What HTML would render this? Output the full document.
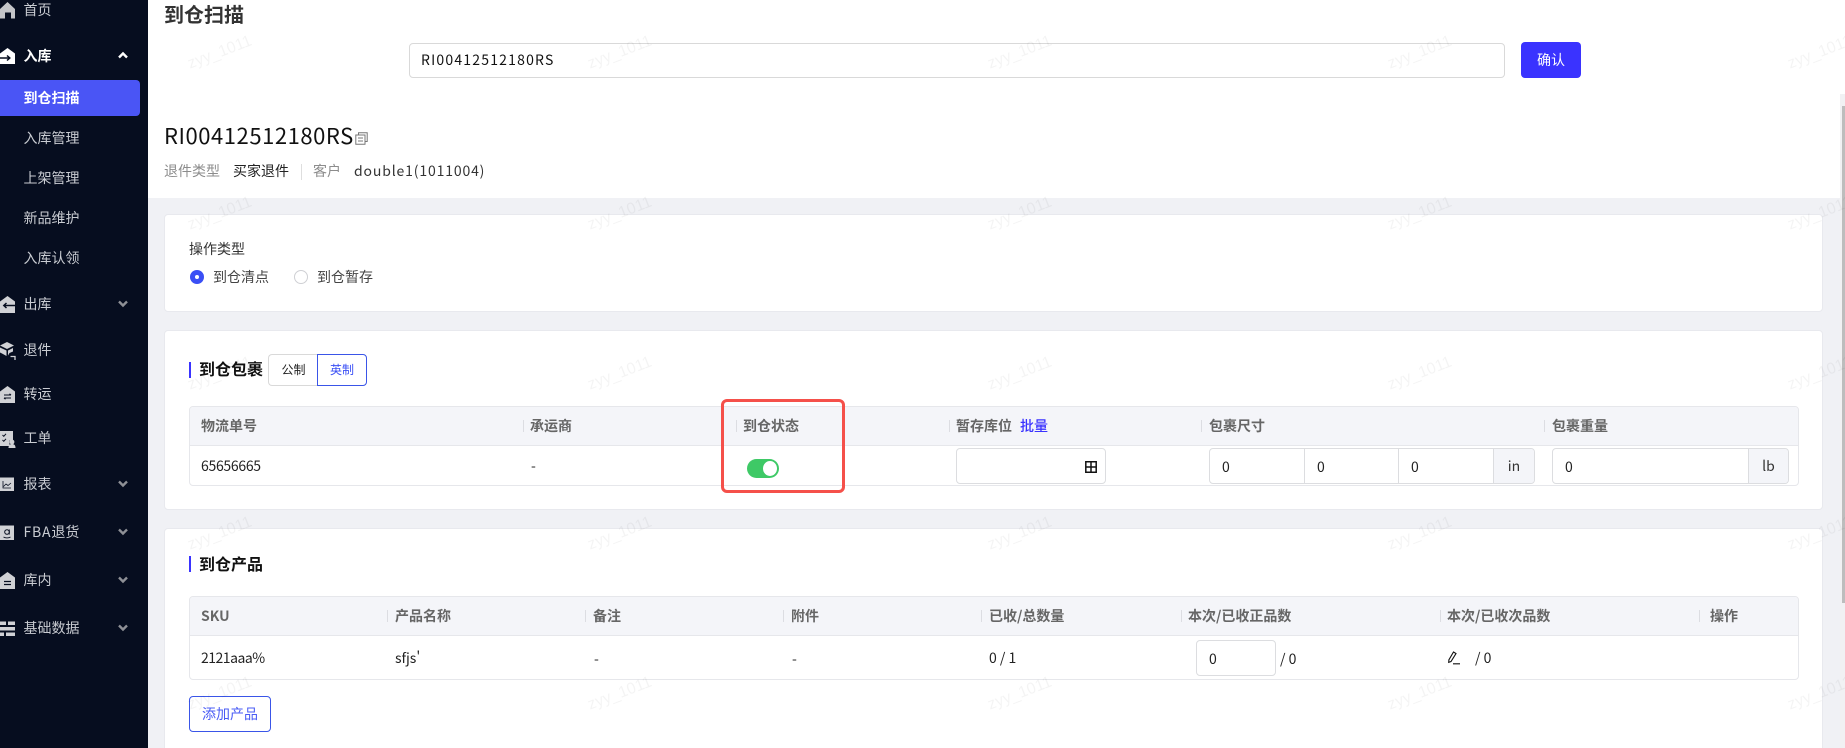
<!DOCTYPE html>
<html lang="zh">
<head>
<meta charset="utf-8">
<title>到仓扫描</title>
<style>
html,body{margin:0;padding:0;width:1845px;height:748px;overflow:hidden;background:#fff}
body{position:relative;font-family:"Noto Sans CJK SC","Liberation Sans",sans-serif;font-size:14px;color:#222}
.a{position:absolute;white-space:nowrap;line-height:20px}
.box{position:absolute;box-sizing:border-box}
#side{position:absolute;left:0;top:0;width:148px;height:748px;background:#060d1f}
.n{position:absolute;left:23.500px;line-height:20px;color:#c9ccd2;white-space:nowrap;font-size:14px}
#side svg{position:absolute;overflow:visible}
.card{position:absolute;left:164px;width:1659px;background:#fff;border:1px solid #e8e9ee;border-radius:4px;box-sizing:border-box}
.tbl{position:absolute;left:189px;width:1610px;box-sizing:border-box;border:1px solid #e6e7eb;border-radius:4px;background:#fff}
.h{position:absolute;white-space:nowrap;line-height:20px;color:#666;font-weight:700}
.sep{position:absolute;width:1px;height:12px;background:#dcdde2}
.bar{position:absolute;left:189px;width:2px;height:16px;background:#3a33ff}
.inp{position:absolute;box-sizing:border-box;border:1px solid #dcdde0;border-radius:4px;background:#fff}
.wm{position:absolute;color:rgba(0,0,0,.045);font-size:16px;line-height:20px;transform:rotate(-21deg);transform-origin:center;white-space:nowrap;pointer-events:none;font-family:"Liberation Sans",sans-serif;width:70px;text-align:center}
</style>
</head>
<body>

<div id="side">
  <div class="box" style="left:0;top:80px;width:140px;height:36px;background:#4a55f5;border-radius:0 4px 4px 0"></div>

  <!-- 首页 -->
  <svg style="left:0;top:0" width="18" height="22" viewBox="0 0 18 22"><path d="M7.500 2 15 9v9.500h-4v-6H5v6H0V9z" fill="#c4c5c9"/></svg>
  <div class="n" style="top:0">首页</div>

  <!-- 入库 -->
  <svg style="left:0;top:46px" width="18" height="20" viewBox="0 0 18 20"><path d="M7.500 2 15 7.500V18H0V7.500z" fill="#fff"/><path d="M0 12h9.500M7 9.500l2.800 2.500L7 14.500" fill="none" stroke="#060d1f" stroke-width="1.500"/></svg>
  <div class="n" style="top:46px;color:#fff;font-weight:700">入库</div>
  <svg style="left:118px;top:52px" width="10" height="7" viewBox="0 0 10 7"><path d="M1 5.500 5 1.500 9 5.500" fill="none" stroke="#fff" stroke-width="2.400"/></svg>

  <div class="n" style="top:88px;color:#fff;font-weight:700">到仓扫描</div>
  <div class="n" style="top:128px">入库管理</div>
  <div class="n" style="top:168px">上架管理</div>
  <div class="n" style="top:208px">新品维护</div>
  <div class="n" style="top:248px">入库认领</div>

  <!-- 出库 -->
  <svg style="left:0;top:295px" width="18" height="20" viewBox="0 0 18 20"><path d="M7.500 1 15 6.500V18H0V6.500z" fill="#d0d1d5"/><path d="M15 10.500H4M6.500 8 3.800 10.500 6.500 13" fill="none" stroke="#060d1f" stroke-width="1.500"/></svg>
  <div class="n" style="top:294px">出库</div>
  <svg style="left:118px;top:300px" width="10" height="7" viewBox="0 0 10 7"><path d="M1 1.500 5 5.500 9 1.500" fill="none" stroke="#8e9096" stroke-width="2.400"/></svg>

  <!-- 退件 -->
  <svg style="left:0;top:340px" width="18" height="20" viewBox="0 0 18 20"><path d="M7 2 14 5.500 7 9 0 5.500z" fill="#d0d1d5"/><path d="M0 7.500 6.500 10.500V16L2 13.500 0 12.500zM8 10.500 13 8v3.500L9.500 13 8 15.500z" fill="#d0d1d5"/><path d="M10.500 16.500h4.500V20" fill="none" stroke="#d0d1d5" stroke-width="1.300"/></svg>
  <div class="n" style="top:340px">退件</div>

  <!-- 转运 -->
  <svg style="left:0;top:385px" width="18" height="20" viewBox="0 0 18 20"><path d="M7.500 1 15 6.500V18H0V6.500z" fill="#d0d1d5"/><path d="M4 10h7M4 13h7M9.500 8.800l1.500 1.200M5.500 14.200 4 13" fill="none" stroke="#060d1f" stroke-width="1.100"/></svg>
  <div class="n" style="top:384px">转运</div>

  <!-- 工单 -->
  <svg style="left:0;top:429px" width="18" height="20" viewBox="0 0 18 20"><path d="M0 2h13v9.500H9.500V17H0z" fill="#d0d1d5"/><path d="M2.500 6l1.300 1.300L6 4.800M2.500 11l1.300 1.300L6 9.800" fill="none" stroke="#060d1f" stroke-width="1"/><circle cx="12" cy="13" r="2.400" fill="#d0d1d5"/><path d="M8.500 19c0-3 1.500-4 3.500-4s3.500 1 3.500 4z" fill="#d0d1d5"/></svg>
  <div class="n" style="top:428px">工单</div>

  <!-- 报表 -->
  <svg style="left:0;top:476px" width="18" height="18" viewBox="0 0 18 18"><path d="M0 1.500h14V15H0z" fill="#d0d1d5"/><path d="M3 5v7h8M3.500 10.500 6 8l2 1.500 3-2.500" fill="none" stroke="#060d1f" stroke-width=".8"/></svg>
  <div class="n" style="top:474px">报表</div>
  <svg style="left:118px;top:480px" width="10" height="7" viewBox="0 0 10 7"><path d="M1 1.500 5 5.500 9 1.500" fill="none" stroke="#8e9096" stroke-width="2.400"/></svg>

  <!-- FBA -->
  <svg style="left:0;top:524px" width="18" height="18" viewBox="0 0 18 18"><path d="M0 1.500h14V16H0z" fill="#d0d1d5"/><circle cx="7" cy="8" r="2.300" fill="none" stroke="#060d1f" stroke-width="1"/><path d="M9.300 5.500v5M3.500 13c2 1.300 5 1.300 7 0" fill="none" stroke="#060d1f" stroke-width=".9"/></svg>
  <div class="n" style="top:522px"><span style="letter-spacing:.8px">FBA</span>退货</div>
  <svg style="left:118px;top:528px" width="10" height="7" viewBox="0 0 10 7"><path d="M1 1.500 5 5.500 9 1.500" fill="none" stroke="#8e9096" stroke-width="2.400"/></svg>

  <!-- 库内 -->
  <svg style="left:0;top:571px" width="18" height="20" viewBox="0 0 18 20"><path d="M7.500 1 15 6.500V18H0V6.500z" fill="#d0d1d5"/><path d="M4 10.500h7M4 13.500h7" fill="none" stroke="#060d1f" stroke-width="1.200"/></svg>
  <div class="n" style="top:570px">库内</div>
  <svg style="left:118px;top:576px" width="10" height="7" viewBox="0 0 10 7"><path d="M1 1.500 5 5.500 9 1.500" fill="none" stroke="#8e9096" stroke-width="2.400"/></svg>

  <!-- 基础数据 -->
  <svg style="left:0;top:620px" width="18" height="18" viewBox="0 0 18 18"><path d="M0 1.500h6V5H0zM8 1.500h7V5H8zM0 7h15v3.500H0zM0 12.500h4V16H0zM6 12.500h9V16H6z" fill="#d0d1d5"/></svg>
  <div class="n" style="top:618px">基础数据</div>
  <svg style="left:118px;top:624px" width="10" height="7" viewBox="0 0 10 7"><path d="M1 1.500 5 5.500 9 1.500" fill="none" stroke="#8e9096" stroke-width="2.400"/></svg>
</div>

<!-- grey background -->
<div class="box" style="left:148px;top:198px;width:1697px;height:550px;background:#f0f1f5"></div>

<!-- header -->
<div class="a" style="left:164px;top:0;font-size:20px;font-weight:700;color:#333;line-height:28px">到仓扫描</div>
<div class="inp" style="left:409px;top:43px;width:1096px;height:35px;border-color:#d9d9d9"></div>
<div class="a" style="left:421px;top:50px;letter-spacing:1.200px;color:#111">RI00412512180RS</div>
<div class="box" style="left:1521px;top:42px;width:60px;height:36px;background:#3a33ff;border-radius:4px;color:#fff;text-align:center;line-height:36px;font-size:14px">确认</div>

<div class="a" style="left:164px;top:121px;font-size:22px;line-height:28px;color:#111;letter-spacing:.55px">RI00412512180RS</div>
<svg class="box" style="left:355px;top:132px" width="13" height="13" viewBox="0 0 13 13"><path d="M3.500 2.500V.8h8.700v8.700h-1.700M.8 3h9.200v9.200H.8zM3 6h5M3 9h5" fill="none" stroke="#777" stroke-width="1"/></svg>
<div class="a" style="left:164px;top:161px;color:#8c8c8c">退件类型</div>
<div class="a" style="left:233px;top:161px;color:#222">买家退件</div>
<div class="box" style="left:301px;top:164px;width:1px;height:16px;background:#dedede"></div>
<div class="a" style="left:313px;top:161px;color:#8c8c8c">客户</div>
<div class="a" style="left:354px;top:161px;color:#333;letter-spacing:.85px">double1(1011004)</div>

<!-- card 1 -->
<div class="card" style="top:214px;height:98px"></div>
<div class="a" style="left:189px;top:239px;color:#333">操作类型</div>
<div class="box" style="left:190px;top:270px;width:14px;height:14px;border-radius:50%;background:#3a4ff5"></div>
<div class="box" style="left:195px;top:275px;width:4px;height:4px;border-radius:50%;background:#fff"></div>
<div class="a" style="left:213px;top:267px;color:#444">到仓清点</div>
<div class="box" style="left:294px;top:270px;width:14px;height:14px;border-radius:50%;background:#fff;border:1px solid #cfd0d4"></div>
<div class="a" style="left:317px;top:267px;color:#444">到仓暂存</div>

<!-- card 2 -->
<div class="card" style="top:330px;height:180px"></div>
<div class="bar" style="top:362px"></div>
<div class="a" style="left:199px;top:358px;font-size:16px;font-weight:700;color:#111">到仓包裹</div>
<div class="box" style="left:268px;top:354px;width:50px;height:32px;border:1px solid #d9d9d9;border-right:0;border-radius:4px 0 0 4px;text-align:center;line-height:30px;font-size:12px;color:#222;background:#fff">公制</div>
<div class="box" style="left:317px;top:354px;width:50px;height:32px;border:1px solid #3a55e8;border-radius:0 4px 4px 0;text-align:center;line-height:30px;font-size:12px;color:#3a4ff5;background:#fff">英制</div>

<div class="tbl" style="top:406px;height:80px"></div>
<div class="box" style="left:190px;top:407px;width:1608px;height:39px;background:#f4f5f9;border-bottom:1px solid #e6e7eb;border-radius:3px 3px 0 0"></div>
<div class="h" style="left:201px;top:416px">物流单号</div>
<div class="sep" style="left:523px;top:420px"></div><div class="h" style="left:530px;top:416px">承运商</div>
<div class="sep" style="left:736px;top:420px"></div><div class="h" style="left:743px;top:416px">到仓状态</div>
<div class="sep" style="left:949px;top:420px"></div><div class="h" style="left:956px;top:416px">暂存库位</div>
<div class="a" style="left:1020px;top:416px;color:#3a33ff;font-weight:500">批量</div>
<div class="sep" style="left:1201px;top:420px"></div><div class="h" style="left:1209px;top:416px">包裹尺寸</div>
<div class="sep" style="left:1544px;top:420px"></div><div class="h" style="left:1552px;top:416px">包裹重量</div>
<div class="a" style="left:201px;top:456px;color:#222;letter-spacing:-.3px">65656665</div>
<div class="a" style="left:531px;top:456px;color:#222">-</div>

<!-- switch -->
<div class="box" style="left:747px;top:459px;width:32px;height:19px;border-radius:10px;background:#3ec966"></div>
<div class="box" style="left:763px;top:461px;width:14px;height:15px;border-radius:50%;background:#fff"></div>

<!-- 暂存 input -->
<div class="inp" style="left:956px;top:448px;width:150px;height:36px"></div>
<svg class="box" style="left:1085px;top:461px" width="12" height="12" viewBox="0 0 12 12"><path d="M.8.800h10.400v10.400H.8zM6 .8v10.400M.8 6h10.400" fill="none" stroke="#111" stroke-width="1.500"/></svg>

<!-- size input -->
<div class="inp" style="left:1209px;top:448px;width:326px;height:36px;overflow:hidden">
  <div class="box" style="left:94px;top:0;width:1px;height:34px;background:#dcdde0"></div>
  <div class="box" style="left:188px;top:0;width:1px;height:34px;background:#dcdde0"></div>
  <div class="box" style="left:283px;top:0;width:41px;height:34px;background:#f4f5f9;border-left:1px solid #dcdde0;text-align:center;line-height:34px;color:#333">in</div>
</div>
<div class="a" style="left:1222px;top:457px;color:#222">0</div>
<div class="a" style="left:1317px;top:457px;color:#222">0</div>
<div class="a" style="left:1411px;top:457px;color:#222">0</div>

<!-- weight input -->
<div class="inp" style="left:1552px;top:448px;width:237px;height:36px;overflow:hidden">
  <div class="box" style="left:195px;top:0;width:40px;height:34px;background:#f4f5f9;border-left:1px solid #dcdde0;text-align:center;line-height:34px;color:#333">lb</div>
</div>
<div class="a" style="left:1565px;top:457px;color:#222">0</div>

<!-- card 3 -->
<div class="card" style="top:528px;height:230px"></div>
<div class="bar" style="top:556px"></div>
<div class="a" style="left:199px;top:553px;font-size:16px;font-weight:700;color:#111">到仓产品</div>

<div class="tbl" style="top:596px;height:84px"></div>
<div class="box" style="left:190px;top:597px;width:1608px;height:39px;background:#f4f5f9;border-bottom:1px solid #e6e7eb;border-radius:3px 3px 0 0"></div>
<div class="h" style="left:201px;top:606px">SKU</div>
<div class="sep" style="left:387px;top:610px"></div><div class="h" style="left:395px;top:606px">产品名称</div>
<div class="sep" style="left:585px;top:610px"></div><div class="h" style="left:593px;top:606px">备注</div>
<div class="sep" style="left:783px;top:610px"></div><div class="h" style="left:791px;top:606px">附件</div>
<div class="sep" style="left:981px;top:610px"></div><div class="h" style="left:989px;top:606px">已收/总数量</div>
<div class="sep" style="left:1181px;top:610px"></div><div class="h" style="left:1188px;top:606px">本次/已收正品数</div>
<div class="sep" style="left:1440px;top:610px"></div><div class="h" style="left:1447px;top:606px">本次/已收次品数</div>
<div class="sep" style="left:1699px;top:610px"></div><div class="h" style="left:1710px;top:606px">操作</div>

<div class="a" style="left:201px;top:648px;color:#222;letter-spacing:-.5px">2121aaa%</div>
<div class="a" style="left:395px;top:648px;color:#222">sfjs'</div>
<div class="a" style="left:594px;top:649px;color:#222">-</div>
<div class="a" style="left:792px;top:649px;color:#222">-</div>
<div class="a" style="left:989px;top:648px;color:#222">0 / 1</div>
<div class="inp" style="left:1196px;top:640px;width:80px;height:36px"></div>
<div class="a" style="left:1209px;top:649px;color:#222">0</div>
<div class="a" style="left:1280px;top:649px;color:#222">/ 0</div>
<svg class="box" style="left:1448px;top:651px" width="13" height="14" viewBox="0 0 13 14"><path d="M5.500 1 8 2.500 3 10.500l-2.300.8.200-2.500zM5 12.800h7" fill="none" stroke="#111" stroke-width="1.100"/></svg>
<div class="a" style="left:1475px;top:648px;color:#222">/ 0</div>

<div class="box" style="left:189px;top:696px;width:82px;height:36px;border:1px solid #3a55e8;border-radius:4px;background:#fff;color:#4a5cf5;text-align:center;line-height:34px">添加产品</div>

<!-- scrollbar -->
<div class="box" style="left:1840px;top:94px;width:5px;height:654px;background:#f1f1f3"></div>
<div class="box" style="left:1842px;top:106px;width:3px;height:497px;background:#bdbdbd"></div>

<!-- red highlight -->
<div class="box" style="left:721px;top:399px;width:124px;height:94px;border:3px solid #f5504a;border-radius:6px"></div>

<!-- watermarks -->
<div class="wm" style="left:185px;top:43px">zyy_1011</div><div class="wm" style="left:585px;top:43px">zyy_1011</div><div class="wm" style="left:985px;top:43px">zyy_1011</div><div class="wm" style="left:1385px;top:43px">zyy_1011</div><div class="wm" style="left:1785px;top:43px">zyy_1011</div>
<div class="wm" style="left:185px;top:204px">zyy_1011</div><div class="wm" style="left:585px;top:204px">zyy_1011</div><div class="wm" style="left:985px;top:204px">zyy_1011</div><div class="wm" style="left:1385px;top:204px">zyy_1011</div><div class="wm" style="left:1785px;top:204px">zyy_1011</div>
<div class="wm" style="left:185px;top:364px">zyy_1011</div><div class="wm" style="left:585px;top:364px">zyy_1011</div><div class="wm" style="left:985px;top:364px">zyy_1011</div><div class="wm" style="left:1385px;top:364px">zyy_1011</div><div class="wm" style="left:1785px;top:364px">zyy_1011</div>
<div class="wm" style="left:185px;top:524px">zyy_1011</div><div class="wm" style="left:585px;top:524px">zyy_1011</div><div class="wm" style="left:985px;top:524px">zyy_1011</div><div class="wm" style="left:1385px;top:524px">zyy_1011</div><div class="wm" style="left:1785px;top:524px">zyy_1011</div>
<div class="wm" style="left:185px;top:684px">zyy_1011</div><div class="wm" style="left:585px;top:684px">zyy_1011</div><div class="wm" style="left:985px;top:684px">zyy_1011</div><div class="wm" style="left:1385px;top:684px">zyy_1011</div><div class="wm" style="left:1785px;top:684px">zyy_1011</div>

</body>
</html>
